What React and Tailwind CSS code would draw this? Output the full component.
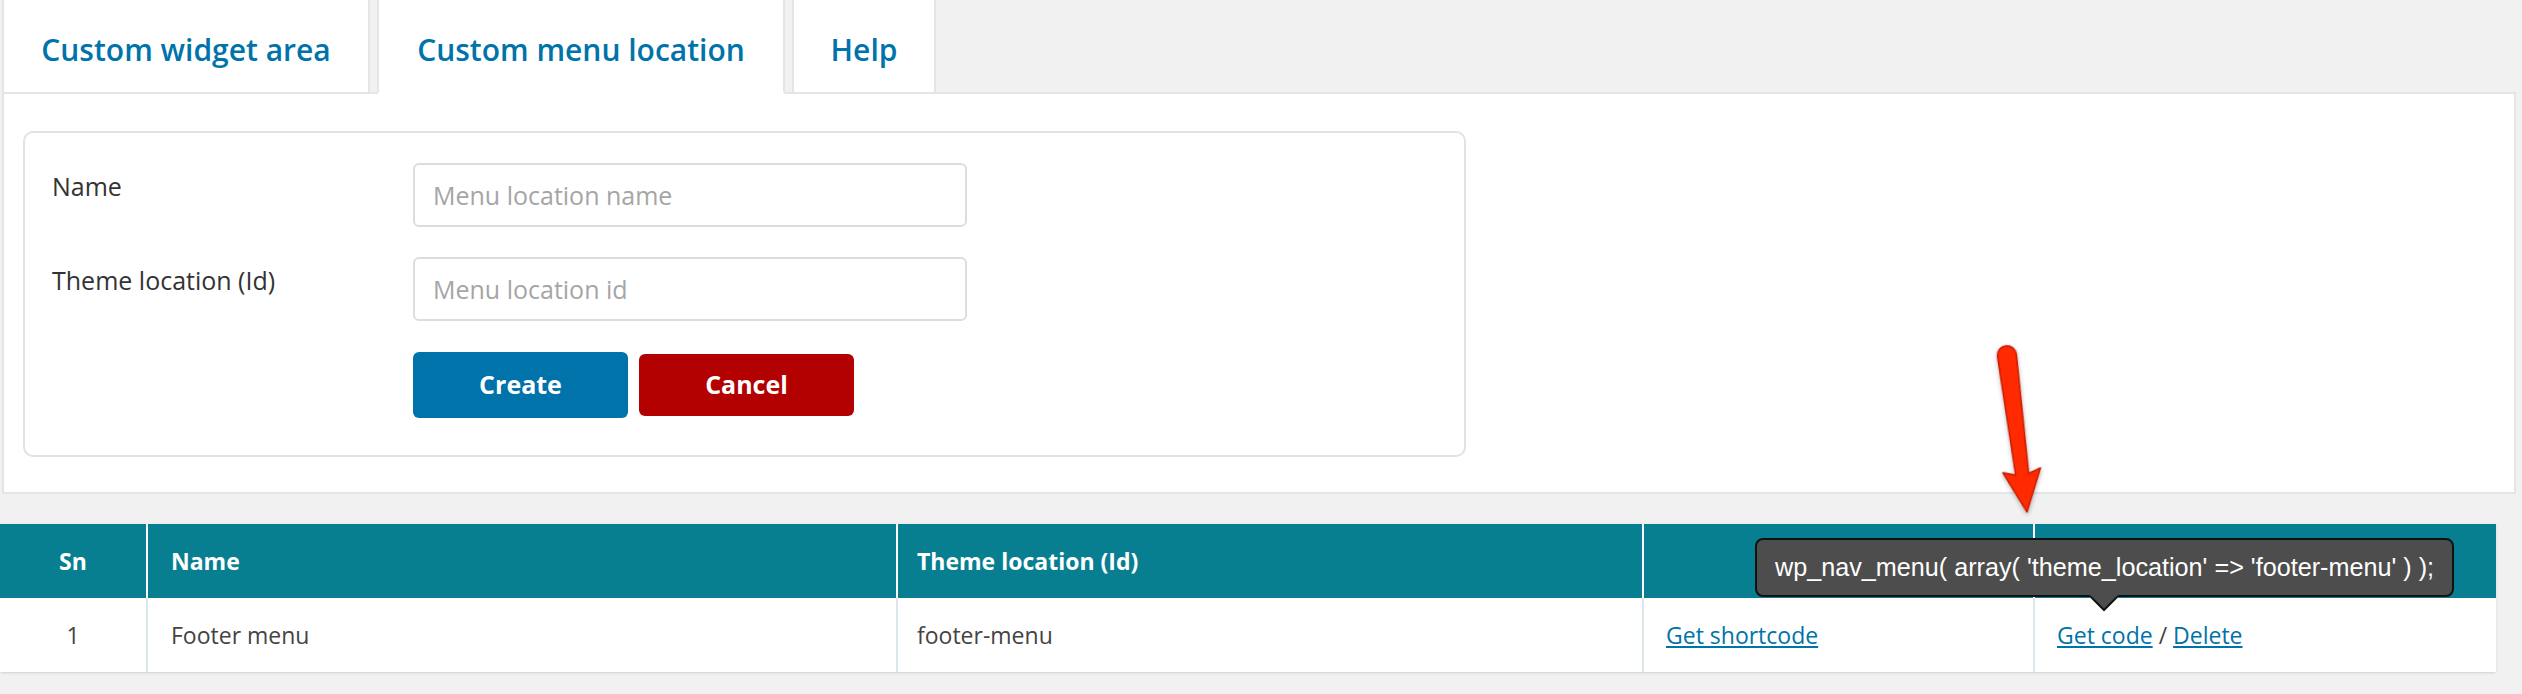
import React from "react";

const tabs = [
  ["Custom widget area", "w-[368px]", false],
  ["Custom menu location", "w-[408px]", true],
  ["Help", "w-[144px]", false],
];

function RedArrow() {
  // skitch-style arrow pointing at the "Get code" column
  return (
    <svg
      className="absolute left-[1960px] top-[320px] pointer-events-none"
      width="110"
      height="210"
      viewBox="0 0 110 210"
    >
      <defs>
        <filter id="arrowShadow" x="-50%" y="-50%" width="200%" height="200%">
          <feDropShadow dx="0" dy="2" stdDeviation="2" floodColor="#000" floodOpacity="0.3" />
        </filter>
      </defs>
      <g transform="translate(67 192) rotate(-7.3)" filter="url(#arrowShadow)">
        <path
          d="M -9.5 -158 L -6.5 -38 L -19 -42 L 0 0 L 19 -42 L 6.5 -38 L 9.5 -158 A 9.5 9.5 0 0 0 -9.5 -158 Z"
          fill="#ff2a00"
          stroke="#c41d00"
          strokeWidth="1.5"
          strokeLinejoin="round"
        />
      </g>
    </svg>
  );
}

export default function App() {
  return (
    <div className="relative min-h-[694px] w-[2522px] bg-[#f1f1f1] font-['Open_Sans',sans-serif] text-[#444]">
      {/* tabs */}
      <div className="relative z-10 flex gap-[7px] pl-[2px]">
        {tabs.map(([label, w, active]) => (
          <div
            key={label}
            className={`${w} h-[94px] flex items-center justify-center pt-[6px] border-2 border-t-0 border-[#e5e5e5] bg-white text-[30px] font-semibold text-[#0073aa] ${
              active ? "border-b-white" : ""
            }`}
          >
            {label}
          </div>
        ))}
      </div>

      {/* panel */}
      <div className="-mt-[2px] ml-[2px] w-[2514px] border-2 border-[#e5e5e5] bg-white pt-[37px] pb-[35px] pl-[19px]">
        <div className="w-[1443px] rounded-[10px] border-2 border-[#e2e2e2] pt-[30px] pb-[37px] pl-[27px]">
          <div className="flex items-start">
            <label className="w-[361px] pt-[6px] text-[25px] leading-[34px] text-[#333]">Name</label>
            <input
              className="h-[64px] w-[554px] rounded-[6px] border-2 border-[#dddddd] px-[18px] text-[25px] text-[#333] placeholder:text-[#a5a5a5] outline-none"
              placeholder="Menu location name"
            />
          </div>
          <div className="mt-[30px] flex items-start">
            <label className="w-[361px] pt-[6px] text-[25px] leading-[34px] text-[#333]">Theme location (Id)</label>
            <input
              className="h-[64px] w-[554px] rounded-[6px] border-2 border-[#dddddd] px-[18px] text-[25px] text-[#333] placeholder:text-[#a5a5a5] outline-none"
              placeholder="Menu location id"
            />
          </div>
          <div className="mt-[31px] flex items-center pl-[361px]">
            <button className="h-[66px] w-[215px] rounded-[6px] bg-[#0073aa] text-[25px] font-bold text-white">
              Create
            </button>
            <button className="ml-[11px] h-[62px] w-[215px] rounded-[6px] bg-[#b30000] text-[25px] font-bold text-white">
              Cancel
            </button>
          </div>
        </div>
      </div>

      {/* table */}
      <div className="relative mt-[30px] w-[2496px] bg-white text-[23px] shadow-sm">
        <div className="flex h-[74px] bg-[#077f91] font-bold text-white">
          <div className="flex w-[146px] items-center justify-center">Sn</div>
          <div className="flex w-[750px] items-center border-l-2 border-white pl-[23px]">Name</div>
          <div className="flex w-[746px] items-center border-l-2 border-white pl-[19px]">Theme location (Id)</div>
          <div className="w-[391px] border-l-2 border-white"></div>
          <div className="flex-1 border-l-2 border-white"></div>
        </div>
        <div className="flex h-[74px] text-[#444]">
          <div className="flex w-[146px] items-center justify-center">1</div>
          <div className="flex w-[750px] items-center border-l-2 border-[#dde6ea] pl-[23px]">Footer menu</div>
          <div className="flex w-[746px] items-center border-l-2 border-[#dde6ea] pl-[19px]">footer-menu</div>
          <div className="flex w-[391px] items-center border-l-2 border-[#dde6ea] pl-[22px]">
            <a href="#" className="text-[#0073aa] underline">Get shortcode</a>
          </div>
          <div className="flex flex-1 items-center border-l-2 border-[#dde6ea] pl-[22px]">
            <a href="#" className="text-[#0073aa] underline">Get code</a>
            <span className="mx-[6px] text-[#444]">/</span>
            <a href="#" className="text-[#0073aa] underline">Delete</a>
          </div>
        </div>

        {/* tooltip */}
        <div className="absolute left-[1755px] top-[14px] flex h-[59px] items-center rounded-[8px] border-2 border-[#111] bg-[#4d4d4d] px-[18px] font-['Liberation_Sans',Arial,sans-serif] text-[25.2px] text-white whitespace-nowrap">
          wp_nav_menu( array( 'theme_location' =&gt; 'footer-menu' ) );
        </div>
        <svg className="absolute left-[2090px] top-[71px]" width="28" height="18" viewBox="0 0 28 18">
          <polygon points="0,0 28,0 14,15" fill="#4d4d4d" />
          <polyline points="1,2 14,15 27,2" fill="none" stroke="#111" strokeWidth="2" />
        </svg>
      </div>

      <RedArrow />
    </div>
  );
}
